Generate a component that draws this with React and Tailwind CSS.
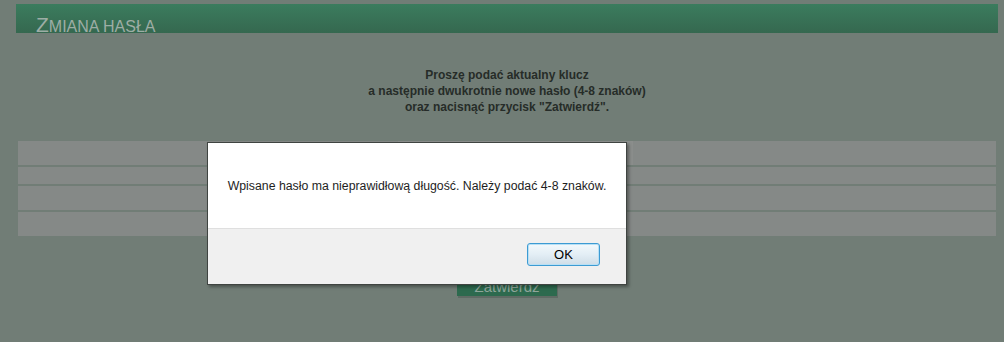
export default function App() {
  return (
    <div className="relative w-[1004px] h-[342px] overflow-hidden bg-[#717d76] font-['Liberation_Sans',Arial,sans-serif]">
      {/* Page (dimmed behind the modal) */}
      <div className="mx-[16px] w-[982px] pt-[4px]">
        <div className="h-[29px] bg-gradient-to-b from-[#3b7c5e] to-[#35684f] pl-[20px] flex items-end">
          <h1 className="text-[#9dada5] text-[21px] leading-none font-normal -mb-[2px]">
            Z<span className="text-[16px] uppercase">miana hasła</span>
          </h1>
        </div>

        <div className="mt-[34px] text-center text-[12px] leading-[16px] font-bold text-[#262c28]">
          <p>Proszę podać aktualny klucz</p>
          <p>a następnie dwukrotnie nowe hasło (4-8 znaków)</p>
          <p>oraz nacisnąć przycisk "Zatwierdź".</p>
        </div>

        <div className="mt-[26px] px-[2px] flex flex-col gap-[2px]">
          <div className="h-[24px] bg-[#858987] flex">
            <div className="ml-[380px] w-[235px] h-full bg-[#8b8e8c]" />
          </div>
          <div className="h-[17px] bg-[#858987]" />
          <div className="h-[24px] bg-[#858987]" />
          <div className="h-[24px] bg-[#858987]" />
        </div>

        <div className="mt-[40px] flex justify-center">
          <button className="w-[100px] h-[20px] bg-[#2d6a4e] text-[#8fa59a] text-[15px] leading-none shadow-[1px_2px_0_#5f6b64]">
            Zatwierdź
          </button>
        </div>
      </div>

      {/* Alert dialog */}
      <div className="absolute left-[207px] top-[142px] w-[420px] h-[143px] bg-white border border-[#3f4441] shadow-[2px_2px_3px_rgba(0,0,0,0.35)] flex flex-col">
        <div className="h-[85px] flex items-center justify-center pt-[2px]">
          <p className="text-[12.3px] text-[#1e1e1e]">
            Wpisane hasło ma nieprawidłową długość. Należy podać 4-8 znaków.
          </p>
        </div>
        <div className="flex-1 bg-[#f0f0f0] border-t border-[#dfdfdf] flex justify-end items-start pt-[14px] pr-[26px]">
          <button className="w-[73px] h-[23px] rounded-[3px] border border-[#3d9bd3] bg-gradient-to-b from-[#f3f9fc] via-[#e3eef5] to-[#cfdde7] text-[13px] text-black shadow-[inset_0_0_0_1px_#b8e0f5]">
            OK
          </button>
        </div>
      </div>
    </div>
  )
}
